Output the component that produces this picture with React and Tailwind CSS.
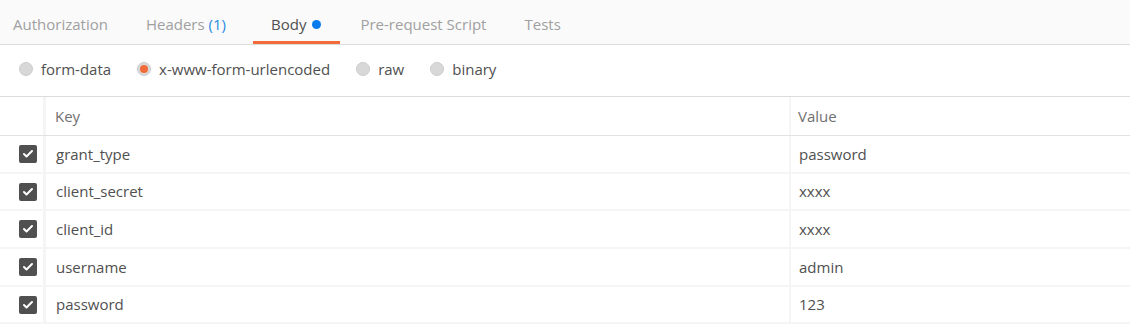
import React from 'react';
import { Check } from 'lucide-react';

const tabs = [
  { label: 'Authorization', cls: 'pl-[13px] pr-[19px]' },
  { label: 'Headers', count: '(1)', cls: 'px-[19px]' },
  { label: 'Body', active: true, cls: 'ml-[8px] pl-[18px] pr-[19px]' },
  { label: 'Pre-request Script', cls: 'pl-[20px] pr-[19px]' },
  { label: 'Tests', cls: 'px-[19px]' },
];

const modes = [
  { label: 'form-data' },
  { label: 'x-www-form-urlencoded', selected: true },
  { label: 'raw' },
  { label: 'binary' },
];

const rows = [
  ['grant_type', 'password'],
  ['client_secret', 'xxxx'],
  ['client_id', 'xxxx'],
  ['username', 'admin'],
  ['password', '123'],
];

function Radio({ selected }) {
  return (
    <span className="w-[14px] h-[14px] rounded-full bg-[#d8d8d8] border border-[#cccccc] flex items-center justify-center shrink-0">
      {selected && <span className="w-[8px] h-[8px] rounded-full bg-[#f26b3a]" />}
    </span>
  );
}

export default function App() {
  return (
    <div className="w-[1130px] h-[325px] bg-white overflow-hidden text-[15px] text-[#505050]" style={{ fontFamily: '"Open Sans", sans-serif' }}>
      {/* tabs */}
      <div className="h-[45px] bg-[#fafafa] border-b border-[#dcdcdc] flex items-stretch">
        {tabs.map((t) => (
          <div
            key={t.label}
            className={`flex items-center gap-[4px] pt-[4px] ${t.cls} ${t.active ? 'text-[#505050] border-b-[3px] border-[#f26b3a] pt-[7px]' : 'text-[#a0a0a0]'}`}
          >
            <span>{t.label}</span>
            {t.count && <span className="text-[#2a8ae3]">{t.count}</span>}
            {t.active && <span className="w-[9px] h-[9px] rounded-full bg-[#097bed] ml-[2px]" />}
          </div>
        ))}
      </div>

      {/* body mode */}
      <div className="h-[52px] border-b border-[#dcdcdc] flex items-center pl-[19px] gap-[26px] pb-[3px]">
        {modes.map((m) => (
          <label key={m.label} className="flex items-center gap-[8px]">
            <Radio selected={m.selected} />
            <span className="text-[#505050]">{m.label}</span>
          </label>
        ))}
      </div>

      {/* table */}
      <div className="grid grid-cols-[43px_3px_743px_2px_1fr]">
        <div className="h-[39px] border-b border-[#e2e2e2]" />
        <div className="h-[39px] bg-[#f5f5f5] border-b border-[#e2e2e2]" />
        <div className="h-[39px] border-b border-[#e2e2e2] flex items-center pl-[9px] text-[#707070]">Key</div>
        <div className="h-[39px] bg-[#f5f5f5] border-b border-[#e2e2e2]" />
        <div className="h-[39px] border-b border-[#e2e2e2] flex items-center pl-[7px] text-[#707070]">Value</div>

        {rows.map(([k, v]) => (
          <React.Fragment key={k}>
            <div className="h-[37.7px] border-b-2 border-[#f5f5f5] flex items-center justify-end pr-[6px]">
              <span className="w-[18px] h-[18px] rounded-[2px] bg-[#505050] flex items-center justify-center">
                <Check size={12} strokeWidth={4} color="#ffffff" />
              </span>
            </div>
            <div className="h-[37.7px] bg-[#f5f5f5]" />
            <div className="h-[37.7px] border-b-2 border-[#f5f5f5] flex items-center pl-[10px]">{k}</div>
            <div className="h-[37.7px] bg-[#f5f5f5]" />
            <div className="h-[37.7px] border-b-2 border-[#f5f5f5] flex items-center pl-[8px]">{v}</div>
          </React.Fragment>
        ))}
      </div>
    </div>
  );
}
